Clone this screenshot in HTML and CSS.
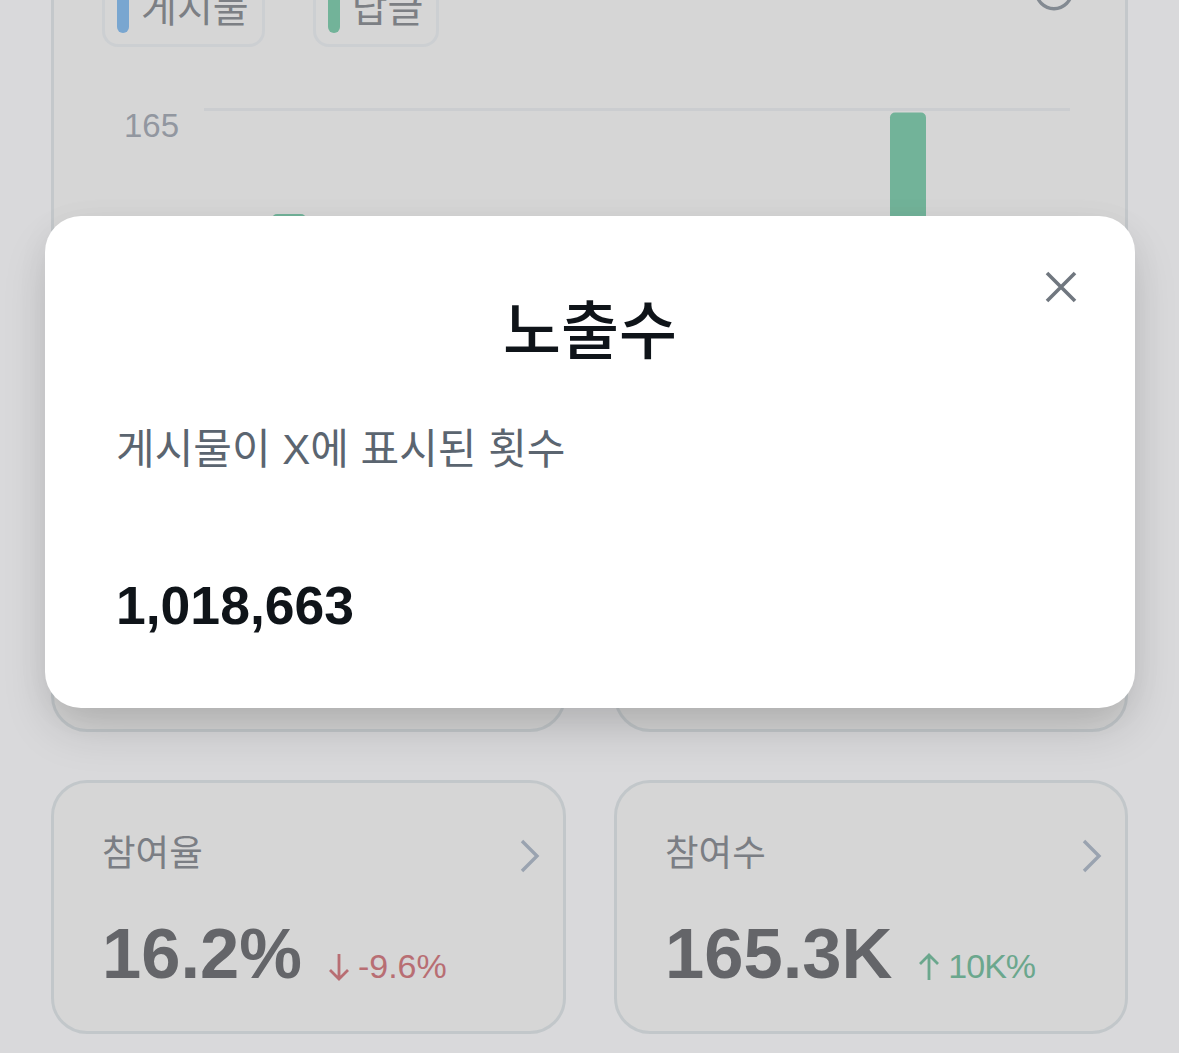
FILE: index.html
```html
<!DOCTYPE html>
<html lang="ko">
<head>
    <meta charset="UTF-8">
    <meta name="viewport" content="width=device-width, initial-scale=1.0">
    <title>노출수</title>
    <link rel="stylesheet" href="styles.css">
</head>
<body>
    <main class="page">
        <!-- Chart -->
        <section class="chart-card">
            <div class="chart-header">
                <div class="legend">
                    <span class="chip"><i class="swatch blue"></i><span>게시물</span></span>
                    <span class="chip"><i class="swatch green"></i><span>답글</span></span>
                </div>
                <svg class="info-icon" viewBox="0 0 40 40">
                    <circle cx="20" cy="20" r="17.7" fill="none" stroke="#838a92" stroke-width="3.4"/>
                    <path d="M20 18v11" stroke="#838a92" stroke-width="3.4"/>
                    <circle cx="20" cy="12" r="2.2" fill="#838a92"/>
                </svg>
            </div>
            <div class="chart-body">
                <span class="axis-label">165</span>
                <svg class="plot" viewBox="0 0 866 300">
                    <rect x="0" y="0" width="866" height="3" fill="#cbcdd0"/>
                    <rect x="68" y="106" width="34" height="194" rx="5" fill="#72b399"/>
                    <rect x="686" y="4.500" width="36" height="296" rx="5" fill="#72b399"/>
                </svg>
            </div>
        </section>

        <!-- Metric cards -->
        <section class="metrics">
            <div class="card"></div>
            <div class="card"></div>
            <div class="card">
                <div class="card-title">
                    <h3>참여율</h3>
                    <svg class="chevron" viewBox="0 0 20 34"><path d="M2 2l15 15L2 32"/></svg>
                </div>
                <div class="card-value">
                    <strong>16.2%</strong>
                    <span class="change down">
                        <svg viewBox="0 0 20 28"><path d="M10 1v25M1 17l9 9 9-9"/></svg>-9.6%
                    </span>
                </div>
            </div>
            <div class="card">
                <div class="card-title">
                    <h3>참여수</h3>
                    <svg class="chevron" viewBox="0 0 20 34"><path d="M2 2l15 15L2 32"/></svg>
                </div>
                <div class="card-value">
                    <strong>165.3K</strong>
                    <span class="change up">
                        <svg viewBox="0 0 20 28"><path d="M10 27V2M1 11l9-9 9 9"/></svg>10K%
                    </span>
                </div>
            </div>
        </section>
    </main>

    <!-- Modal -->
    <div class="modal">
        <button class="close" aria-label="닫기">
            <svg viewBox="0 0 32 32"><path d="M2 2l28 28M30 2L2 30"/></svg>
        </button>
        <h2>노출수</h2>
        <p>게시물이 X에 표시된 횟수</p>
        <strong class="total">1,018,663</strong>
    </div>
</body>
</html>
```
FILE: styles.css
```css
* {
    box-sizing: border-box;
}
body {
    margin: 0;
    height: 1053px;
    overflow: hidden;
    background-color: #d9d9db;
    font-family: "Liberation Sans", "Noto Sans CJK KR", sans-serif;
}
h2, h3, p {
    margin: 0;
    font-weight: 400;
}
svg {
    display: block;
    fill: none;
}
.page {
    width: 1077px;
    margin: -70px 0 0 51px;
}
.chart-card {
    height: 500px;
    padding: 40px 52px 0 48px;
    border: 3px solid #c4c8cb;
    border-radius: 36px;
    background-color: #d6d6d6;
}
.chart-header {
    display: flex;
    justify-content: space-between;
}
.legend {
    display: flex;
    gap: 48px;
}
.chip {
    display: flex;
    align-items: center;
    height: 74px;
    padding: 0 13px 0 12px;
    border: 3px solid #cccfd2;
    border-radius: 16px;
    color: #7c7f84;
    font-size: 39px;
    line-height: 46px;
}
.chip span {
    margin-top: -3px;
}
.swatch {
    width: 12px;
    height: 46px;
    margin-right: 12px;
    border-radius: 6px;
}
.blue {
    background-color: #79a6d0;
}
.green {
    background-color: #72b399;
}
.info-icon {
    width: 40px;
    height: 40px;
    margin: -2px -1px 0 0;
}
.chart-body {
    display: flex;
    justify-content: space-between;
    margin-top: 61px;
    padding-left: 22px;
}
.axis-label {
    color: #9297a0;
    font-size: 33px;
    line-height: 35px;
}
.plot {
    width: 866px;
    height: 300px;
    margin-right: 3px;
}
.metrics {
    display: grid;
    grid-template-columns: 515px 514px;
    grid-auto-rows: 254px;
    gap: 48px;
    margin-top: 48px;
}
.card {
    padding: 44px 23px 0 48px;
    border: 3px solid #c2c7ca;
    border-radius: 36px;
    background-color: #d6d6d6;
}
.card-title {
    display: flex;
    justify-content: space-between;
    align-items: center;
    height: 54px;
}
.card-title h3 {
    color: #7b7e84;
    font-size: 36.5px;
    line-height: 50px;
}
.chevron {
    width: 20px;
    height: 34px;
    margin-top: 4px;
    stroke: #9aa3b0;
    stroke-width: 3.4;
}
.card-value {
    display: flex;
    align-items: baseline;
    gap: 27px;
    margin-top: 33px;
}
.card-value strong {
    color: #646569;
    font-size: 70.5px;
    line-height: 80px;
}
.change {
    display: flex;
    align-items: baseline;
    gap: 9px;
    font-size: 34px;
}
.change svg {
    width: 20px;
    height: 28px;
    margin-bottom: -5px;
    transform: translateY(3px);
    stroke: currentColor;
    stroke-width: 2.8;
}
.down {
    color: #b86e73;
}
.up {
    color: #6ba78d;
    letter-spacing: -1px;
}
/* dialog sits on top of the dimmed page */
.modal {
    position: absolute;
    top: 216px;
    left: 45px;
    width: 1090px;
    height: 492px;
    padding: 73px 71px 0;
    border-radius: 36px;
    background-color: #fff;
    box-shadow: 0 24px 48px -6px rgba(0, 0, 0, 0.17), 0 6px 36px rgba(0, 0, 0, 0.04);
    color: #0f1419;
}
.modal h2 {
    font-size: 63px;
    font-weight: 500;
    line-height: 84px;
    text-align: center;
}
.modal p {
    margin-top: 47px;
    color: #5b6570;
    font-size: 42px;
    line-height: 60px;
}
.total {
    display: block;
    margin-top: 96px;
    font-size: 53.5px;
    line-height: 60px;
}
.close {
    position: absolute;
    top: 55px;
    right: 58px;
    width: 32px;
    height: 32px;
    padding: 0;
    border: none;
    background: none;
}
.close svg {
    stroke: #70777f;
    stroke-width: 3.6;
}
```
